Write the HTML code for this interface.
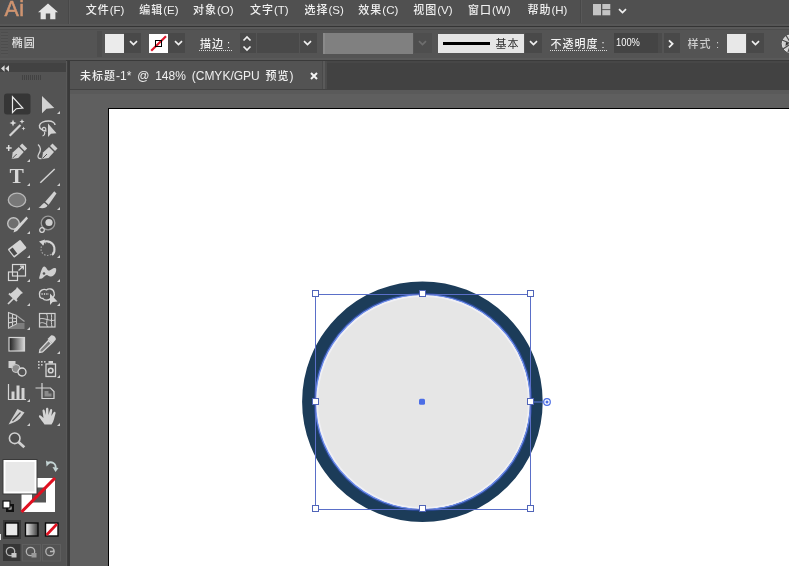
<!DOCTYPE html>
<html lang="zh-CN">
<head>
<meta charset="utf-8">
<title>未标题-1* @ 148% (CMYK/GPU 预览)</title>
<style>
*{box-sizing:border-box;margin:0;padding:0}
html,body{width:789px;height:566px;overflow:hidden;background:#535353}
body{position:relative;font-family:"Liberation Sans","Noto Sans CJK SC",sans-serif;font-size:12px;color:#e4e4e4}
.abs{position:absolute}
.c{letter-spacing:1px;font-size:11px;font-weight:500}
#menubar,#ctrl,#tabbar{will-change:transform}
#menubar{position:absolute;left:0;top:0;width:789px;height:26px;background:#505050;border-bottom:2px solid #565656}
#menubar .mi{position:absolute;top:0;height:20px;line-height:20px;font-size:11.500px;color:#f0f0f0;white-space:nowrap}
#menuline{position:absolute;left:0;top:26px;width:789px;height:4px;background:linear-gradient(180deg,#343434 0 1px,#595959 1px 3px,#4d4d4d 3px 4px)}
#ctrl{position:absolute;left:0;top:27px;width:789px;height:33px}
#ctrlbg{position:absolute;left:0;top:30px;width:789px;height:33px;background:linear-gradient(180deg,#545454 0 28px,#595959 28px 30px,#3a3a3a 30px 31px,#474747 31px 33px)}
#ctrl .lbl{position:absolute;top:0;height:33px;line-height:33px;font-size:11px;color:#f2f2f2;white-space:nowrap}
#ctrl .u{position:absolute;top:23px;height:1px;background:repeating-linear-gradient(90deg,#d8d8d8 0 1px,transparent 1px 2px)}
.dd{position:absolute;top:6px;height:20px;background:#494949}
.chev{position:absolute;width:9px;height:6px}
#tabbar{position:absolute;left:70px;top:61px;width:719px;height:28px}
#tabbg{position:absolute;left:70px;top:63px;width:719px;height:26px;background:#424242}
#tab{position:absolute;left:0;top:0;width:252px;height:28px;background:#535353;font-size:12px;line-height:30px;color:#f0f0f0;white-space:nowrap;word-spacing:2.500px}
#tabsep{position:absolute;left:252px;top:0;width:5px;height:28px;background:linear-gradient(90deg,#4a4a4a 0 1px,#5a5a5a 1px 3px,#4c4c4c 3px 5px)}
#paste{position:absolute;left:70px;top:89px;width:719px;height:477px;background:linear-gradient(180deg,#424242 0 1px,#5a5a5a 1px 5px,#5f5f5f 5px)}
#art{position:absolute;left:108px;top:108px;width:681px;height:458px;background:#fff;border-left:1px solid #000;border-top:1px solid #000}
#tools{position:absolute;left:0;top:60px;width:66px;height:506px;background:#535353}
#toolhead{position:absolute;left:0;top:0;width:66px;height:12px;background:#424242;border-top:3px solid #4a4a4a}
#vline{position:absolute;left:66px;top:61px;width:4px;height:505px;background:linear-gradient(90deg,#595959 0 1px,#3e3e3e 1px 2px,#393939 2px 4px)}
</style>
</head>
<body>
<div id="ctrlbg"></div>
<div id="tabbg"></div>
<div id="menubar">
  <div class="abs" style="left:0;top:0;width:30px;height:18px;background:radial-gradient(ellipse at 50% 45%,rgba(60,90,120,0.350),rgba(60,90,120,0) 75%)"></div>
  <div class="mi" style="left:4.500px;top:-2px;font-size:21.500px;color:#cf9470;line-height:22px;letter-spacing:0.300px;font-weight:400;-webkit-text-stroke:0.500px #cf9470">Ai</div>
  <svg class="abs" style="left:37px;top:3px" width="22" height="18" viewBox="0 0 22 18"><path d="M11 0.400 L1 9.300 H3.600 V16.200 H8.800 V10.500 H13.200 V16.200 H18.400 V9.300 H21 Z" fill="#e4e4e4"/></svg>
  <div class="abs" style="left:68px;top:0;width:2px;height:24px;background:linear-gradient(90deg,#484848 0 1px,#585858 1px 2px)"></div>
  <div class="mi" style="left:85.700px"><span class="c">文件</span>(F)</div>
  <div class="mi" style="left:139.200px"><span class="c">编辑</span>(E)</div>
  <div class="mi" style="left:193.000px"><span class="c">对象</span>(O)</div>
  <div class="mi" style="left:250.000px"><span class="c">文字</span>(T)</div>
  <div class="mi" style="left:304.500px"><span class="c">选择</span>(S)</div>
  <div class="mi" style="left:358.300px"><span class="c">效果</span>(C)</div>
  <div class="mi" style="left:413.200px"><span class="c">视图</span>(V)</div>
  <div class="mi" style="left:468.000px"><span class="c">窗口</span>(W)</div>
  <div class="mi" style="left:527.400px"><span class="c">帮助</span>(H)</div>
  <div class="abs" style="left:580px;top:0;width:2px;height:23px;background:linear-gradient(90deg,#484848 0 1px,#585858 1px 2px)"></div>
  <svg class="abs" style="left:593px;top:4px" width="18" height="12" viewBox="0 0 18 12"><rect x="0" y="0" width="8" height="11.300" fill="#c4c4c4"/><rect x="9.300" y="0" width="8" height="5.200" fill="#c4c4c4"/><rect x="9.300" y="6.100" width="8" height="5.200" fill="#c4c4c4"/></svg>
  <svg class="chev" style="left:618.0px;top:7.5px" viewBox="0 0 9 6"><path d="M1 1.200 L4.500 4.500 L8 1.200" fill="none" stroke="#f0f0f0" stroke-width="1.700"/></svg>
</div>
<div id="menuline"></div>
<div id="ctrl">
  <div class="abs" style="left:1px;top:5px;width:7px;height:24px;background:repeating-linear-gradient(180deg,#4d4d4d 0 1px,#565656 1px 3px)"></div>
  <div class="lbl" style="left:11.700px;top:0;color:#e2e2e2"><span class="c">椭圆</span></div>
  <div class="abs" style="left:97px;top:4px;width:5px;height:26px;background:#4d4d4d"></div>
  <div class="abs" style="left:105px;top:7px;width:19px;height:19px;background:#ebebeb"></div>
  <div class="dd" style="left:124px;width:17px"></div>
  <svg class="chev" style="left:128.8px;top:13px" viewBox="0 0 9 6"><path d="M1 1.200 L4.500 4.500 L8 1.200" fill="none" stroke="#f0f0f0" stroke-width="1.700"/></svg>
  <svg class="abs" style="left:149px;top:7px" width="19" height="19" viewBox="0 0 19 19"><rect width="19" height="19" fill="#fff"/><path d="M2.200 16.800 L17 2.300" stroke="#e0162b" stroke-width="2.200"/><rect x="6.500" y="6.500" width="6" height="6" fill="none" stroke="#000" stroke-width="1"/></svg>
  <div class="dd" style="left:168px;width:17px"></div>
  <svg class="chev" style="left:173.5px;top:13px" viewBox="0 0 9 6"><path d="M1 1.200 L4.500 4.500 L8 1.200" fill="none" stroke="#f0f0f0" stroke-width="1.700"/></svg>
  <div class="lbl" style="left:200px;top:1px"><span class="c">描边</span> :</div><div class="u" style="left:199px;width:33px"></div>
  <div class="dd" style="left:240px;width:16px"></div>
  <svg class="abs" style="left:241.500px;top:7px" width="10" height="18" viewBox="0 0 10 18"><path d="M1.500 6.500 L5 3 L8.500 6.500 M1.500 12.500 L5 16 L8.500 12.500" fill="none" stroke="#f0f0f0" stroke-width="1.700"/></svg>
  <div class="dd" style="left:257px;width:42px"></div>
  <div class="dd" style="left:300px;width:17px"></div>
  <svg class="chev" style="left:303.0px;top:13px" viewBox="0 0 9 6"><path d="M1 1.200 L4.500 4.500 L8 1.200" fill="none" stroke="#f0f0f0" stroke-width="1.700"/></svg>
  <div class="abs" style="left:323px;top:6px;width:90px;height:21px;background:#808080;border-left:2px solid #8a8a8a"></div>
  <div class="dd" style="left:414px;width:18px;background:#4e4e4e"></div>
  <svg class="chev" style="left:418.0px;top:13px" viewBox="0 0 9 6"><path d="M1 1.200 L4.500 4.500 L8 1.200" fill="none" stroke="#6e6e6e" stroke-width="1.700"/></svg>
  <div class="abs" style="left:438px;top:7px;width:86px;height:19px;background:#e6e6e6"></div>
  <div class="abs" style="left:443px;top:15px;width:47px;height:3px;background:#000"></div>
  <div class="lbl" style="left:495.500px;top:1px;color:#303030"><span class="c" style="font-weight:400">基本</span></div>
  <div class="dd" style="left:525px;width:17px"></div>
  <svg class="chev" style="left:529.0px;top:13px" viewBox="0 0 9 6"><path d="M1 1.200 L4.500 4.500 L8 1.200" fill="none" stroke="#f0f0f0" stroke-width="1.700"/></svg>
  <div class="lbl" style="left:550.500px;top:1px"><span class="c">不透明度</span> :</div><div class="u" style="left:550px;width:57px"></div>
  <div class="dd" style="left:614px;width:48px;background:linear-gradient(90deg,#444 0 44px,#4b4b4b 44px)"></div>
  <div class="lbl" style="left:616.300px;top:-1px;font-size:11px;color:#fafafa;transform:scaleX(0.850);transform-origin:0 0">100%</div>
  <div class="dd" style="left:664px;width:16px"></div>
  <svg class="abs" style="left:668.300px;top:12px" width="6" height="10" viewBox="0 0 6 10"><path d="M1 1.300 L4.600 4.800 L1 8.300" fill="none" stroke="#f0f0f0" stroke-width="1.800"/></svg>
  <div class="lbl" style="left:687.500px;top:1px;color:#cdcdcd;word-spacing:1.500px"><span class="c">样式</span> :</div>
  <div class="abs" style="left:727px;top:7px;width:19px;height:19px;background:#e8e8e8"></div>
  <div class="dd" style="left:747px;width:17px"></div>
  <svg class="chev" style="left:751.0px;top:13px" viewBox="0 0 9 6"><path d="M1 1.200 L4.500 4.500 L8 1.200" fill="none" stroke="#f0f0f0" stroke-width="1.700"/></svg>
  <svg class="abs" style="left:781px;top:7px" width="8" height="19" viewBox="0 0 8 19"><circle cx="10" cy="9.700" r="8.800" fill="#cfcfcf" stroke="#e4e4e4" stroke-width="1"/><path d="M10 9.700 L1 6 M10 9.700 L2 15 M10 9.700 L5 1.500 M10 9.700 L7 18" stroke="#4a4a4a" stroke-width="1.200"/><path d="M8 9.700 L4.500 12 L5 8 Z" fill="#333"/></svg>
</div>
<div id="tabbar">
  <div id="tab"><span style="position:absolute;left:10px"id="tt"><span class="c">未标题</span>-1* @ 148% (CMYK/GPU <span class="c">预览</span>)</span>
  <svg class="abs" style="left:240px;top:10.500px" width="8" height="8" viewBox="0 0 8 8"><path d="M1 1 L7 7 M7 1 L1 7" stroke="#f4f4f4" stroke-width="2"/></svg></div>
  <div id="tabsep"></div>
</div>
<div id="paste"></div>
<div id="art"></div>
<svg id="obj" class="abs" style="left:280px;top:260px" width="300" height="280" viewBox="280 260 300 280">
  <circle cx="422.400" cy="401.700" r="113.900" fill="#e6e6e6" stroke="#1c3c59" stroke-width="12.800"/>
  <circle cx="423" cy="402" r="106" fill="none" stroke="#f4f4fa" stroke-width="2" opacity="0.700"/>
  <circle cx="423" cy="402" r="108.300" fill="none" stroke="#2a4a9a" stroke-width="2" opacity="0.800"/>
  <circle cx="423" cy="402" r="107.500" fill="none" stroke="#6d8df0" stroke-width="1.200"/>
  <rect x="315.500" y="294.500" width="215" height="215" fill="none" stroke="#5a6fc8" stroke-width="1"/>
  <g fill="#fff" stroke="#5064b8" stroke-width="1">
    <rect x="312.500" y="290.500" width="6" height="6"/><rect x="419.500" y="290.500" width="6" height="6"/><rect x="527.500" y="290.500" width="6" height="6"/>
    <rect x="312.500" y="398.500" width="6" height="6"/><rect x="527.500" y="398.500" width="6" height="6"/>
    <rect x="312.500" y="505.500" width="6" height="6"/><rect x="419.500" y="505.500" width="6" height="6"/><rect x="527.500" y="505.500" width="6" height="6"/>
  </g>
  <rect x="419" y="398.700" width="6" height="6" rx="1.500" fill="#4c6ee6"/>
  <path d="M534 402 H543.500" stroke="#5a78e0" stroke-width="1"/>
  <circle cx="547" cy="402" r="3.300" fill="#fff" stroke="#4c6ee6" stroke-width="1.200"/>
  <circle cx="547" cy="402" r="1.500" fill="#4c6ee6"/>
</svg>
<div id="tools">
  <div id="toolhead"></div>
</div>
<svg id="toolsvg" class="abs" style="left:0;top:60px;will-change:transform" width="67" height="506" viewBox="0 60 67 506">
<defs>
<linearGradient id="gr1" x1="0" x2="1" y1="0" y2="0"><stop offset="0" stop-color="#1c1c1c"/><stop offset="1" stop-color="#d8d8d8"/></linearGradient>
<linearGradient id="gr2" x1="0" x2="1" y1="0" y2="0"><stop offset="0" stop-color="#f4f4f4"/><stop offset="1" stop-color="#3a3a3a"/></linearGradient>
<path id="tri" d="M0 3 H3 V0 Z" fill="#cfcfcf"/>
</defs>
<!-- header arrows + gripper -->
<path d="M1 68.500 L4.600 65.200 V71.800 Z M5.400 68.500 L9 65.200 V71.800 Z" fill="#dadada"/>
<g stroke="#424242" stroke-width="1"><path d="M22.500 75 V80 M24.500 75 V80 M26.500 75 V80 M28.500 75 V80 M30.500 75 V80 M32.500 75 V80 M34.500 75 V80 M36.500 75 V80 M38.500 75 V80 M40.500 75 V80"/></g>
<!-- corner triangles -->
<g>
<use href="#tri" x="57" y="111"/>
<use href="#tri" x="27" y="159"/>
<use href="#tri" x="27" y="183"/><use href="#tri" x="57" y="183"/>
<use href="#tri" x="27" y="207"/><use href="#tri" x="57" y="207"/>
<use href="#tri" x="27" y="231"/>
<use href="#tri" x="27" y="255"/><use href="#tri" x="57" y="255"/>
<use href="#tri" x="27" y="279"/><use href="#tri" x="57" y="279"/>
<use href="#tri" x="27" y="303"/><use href="#tri" x="57" y="303"/>
<use href="#tri" x="27" y="327"/>
<use href="#tri" x="57" y="351"/>
<use href="#tri" x="57" y="375"/>
<use href="#tri" x="27" y="399"/>
<use href="#tri" x="27" y="423"/><use href="#tri" x="57" y="423"/>
</g>
<!-- row1 -->
<rect x="4" y="93.500" width="26.500" height="21" rx="3" fill="#363636"/>
<path d="M12.500 96.800 V112.600 L16.300 108.700 L22.800 108 Z" fill="none" stroke="#ececec" stroke-width="1.200" stroke-linejoin="miter"/>
<path d="M42 96 V113.200 L46.500 108.800 L54.300 108 Z" fill="#d2d2d2"/>
<!-- row2 wand / lasso -->
<g transform="translate(17 128.500)">
<path d="M-7.300 7.300 L3.500 -3.500" stroke="#d2d2d2" stroke-width="2.200"/>
<path d="M-4 -9 L-3 -6.500 L-0.500 -5.500 L-3 -4.500 L-4 -2 L-5 -4.500 L-7.500 -5.500 L-5 -6.500 Z" fill="#d8d8d8"/>
<path d="M5 -9.500 L5.700 -7.700 L7.500 -7 L5.700 -6.300 L5 -4.500 L4.300 -6.300 L2.500 -7 L4.300 -7.700 Z" fill="#d8d8d8"/>
<path d="M6.500 -2 L7.100 -0.600 L8.500 0 L7.100 0.600 L6.500 2 L5.900 0.600 L4.500 0 L5.900 -0.600 Z" fill="#d8d8d8"/>
</g>
<g transform="translate(47.500 128.500)">
<path d="M-1 2.500 C-6 2 -8.500 -0.500 -8 -3 C-7.500 -6 -3 -7.500 1 -7.500 C5 -7.500 7.500 -5.500 7.500 -3.500" fill="none" stroke="#d2d2d2" stroke-width="1.500"/>
<path d="M-3.500 2.500 a1.800 1.800 0 1 1 0.100 0 M-3 3.500 C-2.500 5.500 -3.500 7 -5 7.500" fill="none" stroke="#d2d2d2" stroke-width="1.200"/>
<path d="M0.500 -5 V8.500 L3.500 5.200 L9 4.800 Z" fill="#d2d2d2"/>
</g>
<!-- row3 pens -->
<g transform="translate(16.200 152.500)">
<path d="M-10 -4.500 H-4.500 M-7.500 -7.500 V-1.500" stroke="#dcdcdc" stroke-width="1.500"/>
<path d="M-4.500 6.500 L-3.500 0 L2.500 -5.500 L7.500 -0.500 L2 5.500 Z" fill="#d0d0d0"/>
<path d="M3.500 -6.500 L6 -9 L11 -4 L8.500 -1.500 Z" fill="#d0d0d0"/>
<path d="M-4 6 L0.500 1.500" stroke="#535353" stroke-width="1"/>
</g>
<g transform="translate(46.500 152.500)">
<path d="M-8.500 -8 C-5 -5 -6 -1 -8 2 C-9.500 4.500 -8 6.500 -5 6" fill="none" stroke="#d0d0d0" stroke-width="1.300"/>
<path d="M-4.500 6.500 L-3.500 0 L2.500 -5.500 L7.500 -0.500 L2 5.500 Z" fill="#d0d0d0"/>
<path d="M3.500 -6.500 L6 -9 L11 -4 L8.500 -1.500 Z" fill="#d0d0d0"/>
<path d="M-4 6 L0.500 1.500" stroke="#535353" stroke-width="1"/>
</g>
<!-- row4 T / line -->
<text x="16.700" y="183.300" text-anchor="middle" font-family="'Liberation Serif',serif" font-weight="bold" font-size="21.500" fill="#d8d8d8">T</text>
<path d="M40.300 182.800 L54.700 169" stroke="#d2d2d2" stroke-width="1.500"/>
<!-- row5 ellipse / brush -->
<ellipse cx="17" cy="200" rx="8.700" ry="6.800" fill="#787878" stroke="#b8b8b8" stroke-width="1.300"/>
<g transform="translate(47.500 200.500)">
<path d="M6.800 -9.300 L-2.300 1.200 L1.200 4.200 L9 -7 Z" fill="#d2d2d2"/>
<path d="M-3 2.500 C-5.500 3 -6 6 -9 7 C-5 8.500 -1 7.500 0 5 Z" fill="#d2d2d2"/>
</g>
<!-- row6 shaper / blob -->
<g transform="translate(17 224.500)">
<circle cx="-3.500" cy="-1" r="5.800" fill="#6e6e6e" stroke="#c4c4c4" stroke-width="1.400"/>
<path d="M9.500 -8 L11 -6 L0 6.500 L-3.500 8 L-2.500 4.500 Z" fill="#d4d4d4"/>
</g>
<g transform="translate(47.500 224.500)">
<circle cx="0.500" cy="-1.500" r="6.800" fill="#484848" stroke="#9a9a9a" stroke-width="1.300"/>
<circle cx="1.500" cy="-2" r="3.600" fill="#cfcfcf"/>
<circle cx="-5.500" cy="5.500" r="2.300" fill="#535353" stroke="#dcdcdc" stroke-width="1.200"/>
</g>
<!-- row7 eraser / rotate -->
<g transform="translate(17 248.500) rotate(-38)">
<rect x="-8" y="-5" width="16" height="10.500" rx="1" fill="#d4d4d4"/>
<rect x="-6.800" y="-3.500" width="4" height="7.500" fill="#4a4a4a"/>
</g>
<g transform="translate(47.500 248.500)">
<circle cx="0" cy="0.500" r="6.500" fill="none" stroke="#a0a0a0" stroke-width="1.200" stroke-dasharray="1.500 1.500"/>
<path d="M-5 -6 C0 -9 7 -6 7 1 C7 3.500 6 5.500 4.500 6.500" fill="none" stroke="#d4d4d4" stroke-width="2"/>
<path d="M-8.500 -7 L-2.500 -9 L-4 -3 Z" fill="#d4d4d4"/>
</g>
<!-- row8 scale / warp -->
<g transform="translate(17 272.500)" fill="none" stroke="#d8d8d8" stroke-width="1.200">
<rect x="-4.500" y="-8" width="13" height="11.500"/>
<rect x="-8.500" y="-0.500" width="9" height="8.500"/>
<path d="M1.500 -2 L6 -6 M3 -6.300 H6.300 V-3" stroke-width="1.300"/>
</g>
<g transform="translate(47.500 272.500)">
<path d="M-8.500 6 C-7 1 -6 -5 -3.500 -6 C-1 -6.500 -0.500 -1 2 -2 C4.500 -3 6 -5.500 8.500 -4 C9.500 -1.500 7 4.500 3 4 C0.500 3.500 0 1.500 -2 3 C-4 4.500 -5 7 -8.500 6 Z" fill="#cfcfcf"/>
<circle cx="-3.500" cy="1" r="1.300" fill="#535353"/>
</g>
<!-- row9 pin / shape builder -->
<g transform="translate(16.500 296.500)">
<path d="M-8.500 7.500 L-2.500 1.500" stroke="#d2d2d2" stroke-width="1.700"/>
<path d="M-6.500 -2.500 L-4 -4.500 L-0.500 -7.500 L0.500 -9.500 L6.500 -3.500 L4.500 -2.500 L1.500 1 L-0.500 3.500 Z" fill="#d2d2d2"/>
<path d="M-7.500 -3 L0.500 4.500" stroke="#d2d2d2" stroke-width="1.800"/>
</g>
<g transform="translate(47.500 296.500)">
<path d="M-8 -2 C-8.500 -6 -4 -8 -1 -6.500 C1 -8.500 6 -8 6.500 -4 C7.500 -1 6 1.500 3 2 C1 4.500 -3.500 4 -4.500 2 C-7 2 -8 0 -8 -2 Z" fill="none" stroke="#d4d4d4" stroke-width="1.300"/>
<path d="M-6 -2.500 H1.500" stroke="#e0e0e0" stroke-width="1.300" stroke-dasharray="1.200 1.200"/>
<path d="M2.500 -3 V8.500 L5.200 5.500 L10 5 Z" fill="#d4d4d4"/>
</g>
<!-- row10 perspective / mesh -->
<g transform="translate(17 320.500)" fill="none" stroke="#cfcfcf" stroke-width="1.100">
<path d="M-8.500 -8 L-0.500 -5 V3.500 L-8.500 7.500 Z M-8.500 -2.800 L-0.500 -2 M-8.500 2.400 L-0.500 0.800 M-4.500 -6.500 V5.500"/>
<path d="M-0.500 -5 L7.500 1 M-0.500 3.500 H7.500 M-8.500 7.500 H7.500 M-4 5.500 H7.500" stroke="#a8a8a8"/>
</g>
<g transform="translate(47.500 320.500)" fill="none" stroke="#d2d2d2" stroke-width="1.200">
<rect x="-8" y="-7" width="15.500" height="13.500"/>
<path d="M-8 -1.500 C-4 -3.500 3 1.500 7.500 -0.500 M-1 -7 C1.500 -2 -2.500 2 0 6.500 M-8 3 C-5 1 -3 3 -1 3.500 M3.500 -7 C5 -4 3 0 4.500 6.500" stroke-width="1"/>
</g>
<!-- row11 gradient / eyedropper -->
<rect x="9" y="337.500" width="15.500" height="13.500" fill="url(#gr1)" stroke="#d4d4d4" stroke-width="1.200"/>
<g transform="translate(47.500 344.500)">
<path d="M-8 8 L-7.500 5 L1 -4 L4 -1 L-5 7.500 Z" fill="#7c7c7c" stroke="#d6d6d6" stroke-width="1.300"/>
<path d="M0 -5.500 L3.500 -9 C5.500 -10.500 9.500 -6.500 8 -4.500 L5 -1 Z" fill="#d2d2d2"/>
</g>
<!-- row12 blend / symbol sprayer -->
<g transform="translate(17 368.500)">
<rect x="-8.500" y="-7.500" width="7" height="7" fill="#d0d0d0"/>
<circle cx="-1" cy="0" r="4" fill="#8a8a8a" stroke="#c8c8c8" stroke-width="1"/>
<circle cx="5" cy="3.500" r="4" fill="#535353" stroke="#dcdcdc" stroke-width="1.300"/>
</g>
<g transform="translate(47.500 368.500)">
<g fill="#c8c8c8"><rect x="-9.500" y="-7.500" width="1.600" height="1.600"/><rect x="-6.500" y="-7.500" width="1.600" height="1.600"/><rect x="-3.500" y="-7.500" width="1.600" height="1.600"/><rect x="-9.500" y="-4.500" width="1.600" height="1.600"/><rect x="-6.500" y="-4.500" width="1.600" height="1.600"/><rect x="-9.500" y="-1.500" width="1.600" height="1.600"/></g>
<rect x="-1.500" y="-4.500" width="9.500" height="12.500" fill="#535353" stroke="#d4d4d4" stroke-width="1.300"/>
<rect x="1" y="-7.500" width="4.500" height="2.500" fill="#d4d4d4"/>
<circle cx="3.200" cy="2" r="2.300" fill="none" stroke="#d4d4d4" stroke-width="1.600"/>
</g>
<!-- row13 graph / artboard -->
<g transform="translate(17 392.500)">
<path d="M-8.500 -8.500 V7 H9" fill="none" stroke="#d4d4d4" stroke-width="1.200"/>
<rect x="-5.500" y="-1" width="3" height="7.500" fill="#d4d4d4"/><rect x="-0.500" y="-7" width="3" height="13.500" fill="#d4d4d4"/><rect x="4.500" y="-4.500" width="3" height="11" fill="#d4d4d4"/>
</g>
<g transform="translate(47.500 392.500)">
<path d="M-12 -4.500 H-2 M-5.500 -9.500 V6 H6.500 V-1 L3 -4.500 H-2" fill="none" stroke="#d4d4d4" stroke-width="1.200"/>
<path d="M-3 -1.500 H1 V1 H4 V4 H-3 Z" fill="#8a8a8a"/>
</g>
<!-- row14 slice / hand -->
<g transform="translate(17 416.500)">
<path d="M-8.500 8 L0.500 -7.500 L7.500 -4 L3 2 C0 5 -4 6.500 -8.500 8 Z" fill="#d0d0d0"/>
<path d="M-4.500 4.500 L3.500 -4" stroke="#535353" stroke-width="1.200"/>
</g>
<g transform="translate(47.500 416.500)">
<path d="M-3 8 C-5 5 -7 2.500 -8.500 0.500 C-9 -1 -7.500 -1.800 -6.200 -0.500 L-4 1.500 L-5 -5.500 C-5.200 -7.200 -3.200 -7.500 -2.800 -6 L-1.800 -1.500 L-1.500 -7.500 C-1.400 -9.200 0.800 -9.200 0.900 -7.500 L1 -1.500 L2.500 -6.500 C3 -8 5 -7.500 4.700 -5.800 L3.800 -0.500 L6 -4 C6.800 -5.300 8.500 -4.500 8 -3 C7 0 6.500 5 4 8 Z" fill="#d4d4d4"/>
</g>
<!-- row15 zoom -->
<circle cx="14.700" cy="438.300" r="5.300" fill="#4c4c4c" stroke="#d0d0d0" stroke-width="1.600"/>
<path d="M18.500 442 L24.300 447.300" stroke="#d0d0d0" stroke-width="2.800"/>
<!-- fill / stroke -->
<g>
<rect x="21.500" y="478" width="33.500" height="34" fill="#fff"/>
<rect x="32" y="487.500" width="14" height="15" fill="#555"/>
<path d="M21.500 512 L55 478" stroke="#e01020" stroke-width="3.200"/>
<rect x="2.500" y="459" width="35" height="35.500" fill="#3a3a3a"/>
<rect x="3.500" y="460" width="33" height="33.500" fill="#fff"/>
<rect x="5.500" y="462" width="29" height="29.500" fill="#e8e8e8"/>
<g transform="translate(0.500 -1.500)"><path d="M46.500 465 C51 462 56 465 55 470" fill="none" stroke="#c4d4d4" stroke-width="1.800"/>
<path d="M45.500 462 L49.500 464.500 L46 468 Z M52 468.500 L58 469.500 L55 473.500 Z" fill="#c4d4d4"/></g>
<rect x="6.500" y="504.500" width="7" height="7" fill="#111" stroke="#111" stroke-width="1"/>
<rect x="8.500" y="506.500" width="3" height="3" fill="#e0e0e0"/>
<rect x="3" y="501" width="7" height="7" fill="#fff" stroke="#111" stroke-width="1.200"/>
</g>
<!-- colour mode buttons -->
<rect x="3" y="520" width="18" height="19" fill="#383838"/>
<rect x="5.500" y="523" width="12.500" height="13" fill="#e8e8e8" stroke="#0c0c0c" stroke-width="1.400"/>
<rect x="25.500" y="523" width="12.500" height="13" fill="url(#gr2)" stroke="#0c0c0c" stroke-width="1.400"/>
<rect x="45.500" y="523" width="12.500" height="13" fill="#fff" stroke="#0c0c0c" stroke-width="1.400"/>
<path d="M46.500 535 L57 524" stroke="#e01020" stroke-width="2.600"/>
<!-- draw modes -->
<rect x="3" y="544" width="17.500" height="17" fill="#363636"/>
<rect x="22.500" y="544.500" width="18" height="16.500" fill="none" stroke="#5e5e5e" stroke-width="1"/>
<rect x="42.500" y="544.500" width="18" height="16.500" fill="none" stroke="#5e5e5e" stroke-width="1"/>
<g fill="none" stroke="#b4b4b4" stroke-width="1.300">
<circle cx="10.500" cy="551.500" r="4.200"/><circle cx="30.500" cy="551.500" r="4.200"/><circle cx="50" cy="551.500" r="4.200"/>
</g>
<rect x="11.500" y="553" width="5" height="4.500" fill="#c8c8c8"/>
<rect x="31.500" y="553" width="5" height="4.500" fill="#9a9a9a"/>
<path d="M50 551.500 h3.500 v-2" fill="none" stroke="#b4b4b4" stroke-width="1.300"/>
<rect x="0" y="534" width="1" height="6" fill="#e8e8e8"/>
</svg>

<div id="vline"></div>
</body>
</html>
